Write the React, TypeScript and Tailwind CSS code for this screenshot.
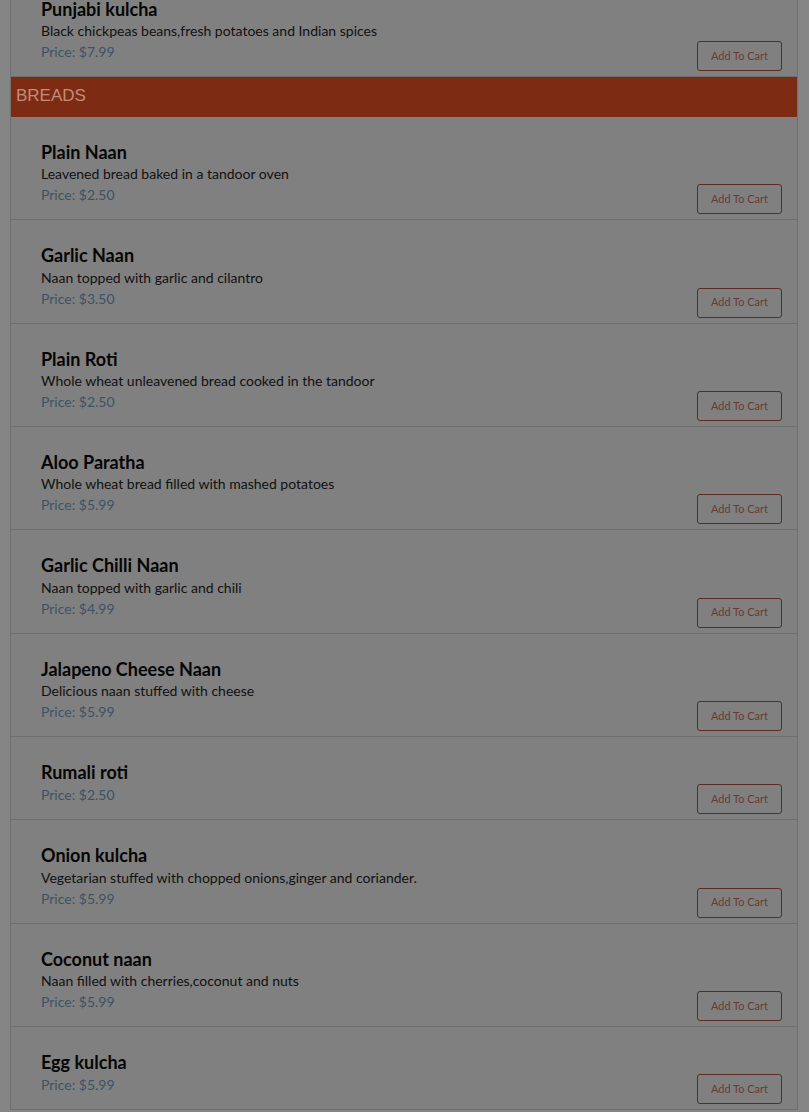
import React from "react";

type Dish = { name: string; desc?: string; price: string };

const topItem: Dish = {
  name: "Punjabi kulcha",
  desc: "Black chickpeas beans,fresh potatoes and Indian spices",
  price: "$7.99",
};

const breads: Dish[] = [
  { name: "Plain Naan", desc: "Leavened bread baked in a tandoor oven", price: "$2.50" },
  { name: "Garlic Naan", desc: "Naan topped with garlic and cilantro", price: "$3.50" },
  { name: "Plain Roti", desc: "Whole wheat unleavened bread cooked in the tandoor", price: "$2.50" },
  { name: "Aloo Paratha", desc: "Whole wheat bread filled with mashed potatoes", price: "$5.99" },
  { name: "Garlic Chilli Naan", desc: "Naan topped with garlic and chili", price: "$4.99" },
  { name: "Jalapeno Cheese Naan", desc: "Delicious naan stuffed with cheese", price: "$5.99" },
  { name: "Rumali roti", price: "$2.50" },
  { name: "Onion kulcha", desc: "Vegetarian stuffed with chopped onions,ginger and coriander.", price: "$5.99" },
  { name: "Coconut naan", desc: "Naan filled with cherries,coconut and nuts", price: "$5.99" },
  { name: "Egg kulcha", price: "$5.99" },
];

function MenuItem({ dish }: { dish: Dish }) {
  return (
    <div className="border-b border-[#6f6f6f] pt-[23px] pb-[5px] pl-[30px] pr-[15px]">
      <h3 className="text-[18px] leading-[24.33px] font-bold text-[#050505]">{dish.name}</h3>
      {dish.desc && <p className="text-[14px] leading-[20px] text-[#111111]">{dish.desc}</p>}
      <div className="flex items-start justify-between">
        <span className="text-[14px] leading-[21px] text-[#3e5266]">Price: {dish.price}</span>
        <button className="h-[30px] w-[85px] rounded-[3px] border border-[#5a2a24] text-[11px] text-[#6b3a32]">
          Add To Cart
        </button>
      </div>
    </div>
  );
}

export default function App() {
  return (
    <div className="h-[1112px] overflow-hidden bg-[#858585] font-['Lato',sans-serif]">
      <div className="mx-[10px] -mt-[26.33px] w-[788px] border-x border-[#707070] bg-[#808080]">
        <MenuItem dish={topItem} />
        <div className="flex h-[40px] items-center bg-[#7d2b12] pl-[5px]">
          <span className="-mt-[2px] font-['Liberation_Sans',Arial,sans-serif] text-[17px] text-[#c48b78]">BREADS</span>
        </div>
        {breads.map((d) => (
          <MenuItem key={d.name} dish={d} />
        ))}
      </div>
    </div>
  );
}
